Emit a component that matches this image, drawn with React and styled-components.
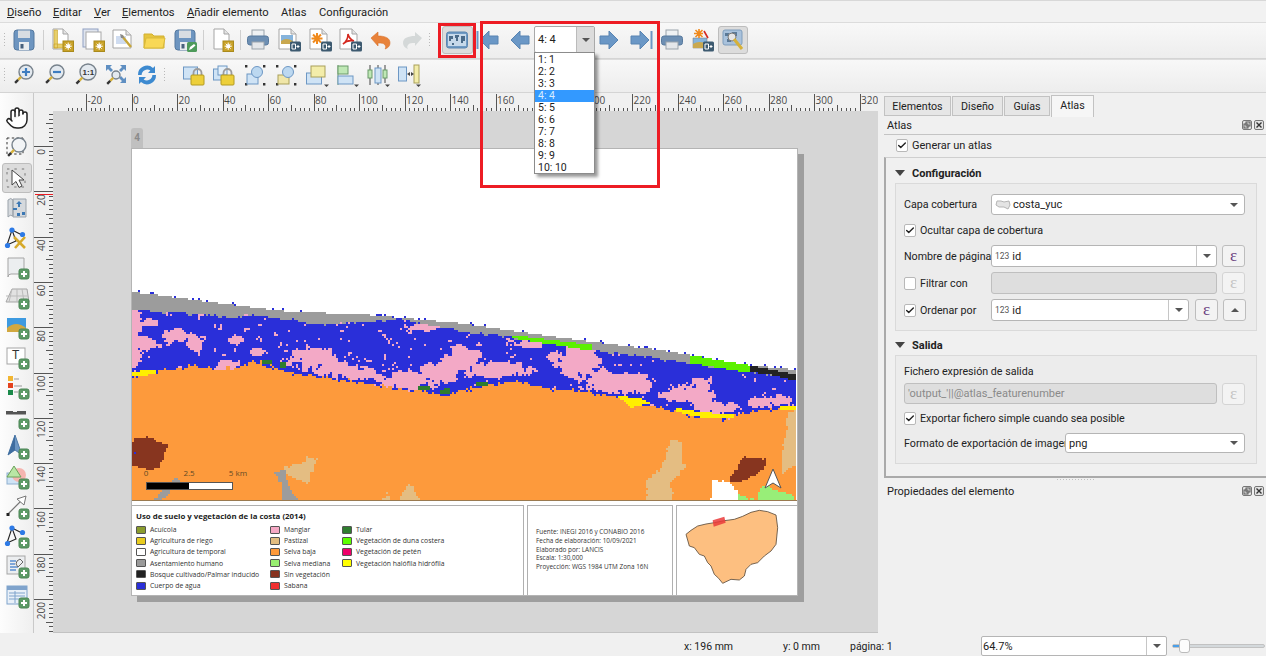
import React from "react";
import styled, { createGlobalStyle } from "styled-components";
import { Hand, Check } from "lucide-react";

const GlobalStyle = createGlobalStyle`
  html, body { margin: 0; padding: 0; overflow: hidden; }
  body { font-family: Roboto, "Noto Sans", sans-serif; font-size: 11px; color: #222; }
  * { box-sizing: border-box; }
`;

/* ---------- map raster, computed once from hand-measured outlines ---------- */

const line = (pts, x) => {
  if (x <= pts[0][0]) return pts[0][1];
  for (let i = 1; i < pts.length; i++) {
    if (x <= pts[i][0]) {
      const [a, b] = pts[i - 1];
      const [c, d] = pts[i];
      return b + ((d - b) * (x - a)) / (c - a);
    }
  }
  return pts[pts.length - 1][1];
};
const rnd = (x, y) => {
  const s = Math.sin(x * 127.1 + y * 311.7) * 43758.5453;
  return s - Math.floor(s);
};
const smooth = (x, y) => {
  const i = Math.floor(x), j = Math.floor(y);
  const u = x - i, v = y - j;
  const a = u * u * (3 - 2 * u), b = v * v * (3 - 2 * v);
  const top = rnd(i, j) * (1 - a) + rnd(i + 1, j) * a;
  const bot = rnd(i, j + 1) * (1 - a) + rnd(i + 1, j + 1) * a;
  return top * (1 - b) + bot * b;
};
const fbm = (x, y) => smooth(x, y) * 0.6 + smooth(x * 2.3, y * 2.3) * 0.4;
const inside = (pts, x, y) => {
  let hit = false;
  for (let i = 0, j = pts.length - 1; i < pts.length; j = i++) {
    const [a, b] = pts[i];
    const [c, d] = pts[j];
    if (b > y !== d > y && x < ((c - a) * (y - b)) / (d - b) + a) hit = !hit;
  }
  return hit;
};

const C = {
  gray: "#9c9c9c", blue: "#2a2fd9", pink: "#f3a9c6", orange: "#fd9a3c", tan: "#e4bd82",
  brown: "#87351f", lime: "#5cf000", black: "#232323", yellow: "#ffee00", forest: "#2f7d2f",
  light: "#98ee78", white: "#ffffff",
};

const coast = [[132,292],[158,295],[225,304],[292,312],[358,314],[458,323],[527,333],[593,342],[660,350],[690,355],[747,365],[797,370]];
const grayEnd = [[132,310],[182,313],[242,318],[248,314],[292,320],[325,325],[365,322],[398,319],[460,331],[510,337],[593,350],[690,363],[750,372],[797,377]];
const orangeTop = [[132,376],[158,371],[198,366],[215,369],[238,368],[252,361],[272,366],[292,374],[325,378],[372,384],[412,391],[445,395],[462,390],[510,382],[560,390],[593,393],[617,397],[660,408],[693,415],[727,418],[760,410],[797,408]];

const blobs = [
  [133,340,9,38],[145,344,12,10],[152,323,11,4],[175,336,13,8],[195,344,9,11],[235,340,9,6],[258,352,11,4],
  [225,365,13,6],[312,358,30,12],[338,370,32,8],[360,374,20,6],[408,381,36,10],[458,363,22,11],[442,373,24,13],
  [425,327,18,4],[458,350,10,6],[470,357,15,7],[493,370,40,8],[577,363,25,17],[580,352,18,8],[620,383,36,12],
  [603,377,15,10],[640,387,15,7],[677,395,18,8],[700,393,15,17],[713,407,20,7],[727,408,17,6],[760,403,13,6],
  [780,400,12,6],[557,357,10,6],[785,345,10,6],[530,345,14,4],
];

const bandOver = [
  [C.lime, [[512,335],[592,345],[592,351],[512,338]]],
  [C.lime, [[690,355],[750,365],[750,373],[690,363]]],
  [C.black, [[749,365],[797,375],[797,381],[773,375],[750,372]]],
  [C.yellow, [[617,396],[640,398],[650,403],[630,408],[625,402]]],
  [C.yellow, [[677,408],[700,412],[735,415],[733,419],[700,417],[677,412]]],
  [C.yellow, [[132,372],[156,369],[156,374],[132,377]]],
  [C.yellow, [[780,407],[797,407],[797,411],[780,410]]],
  [C.forest, [[262,360],[272,361],[272,365],[262,364]]],
  [C.forest, [[281,362],[287,362],[287,368],[281,368]]],
  [C.forest, [[419,385],[430,386],[430,391],[419,390]]],
  [C.forest, [[439,390],[450,388],[449,394],[440,394]]],
  [C.forest, [[477,381],[488,383],[488,386],[477,385]]],
];
const landOver = [
  [C.brown, [[130,441],[147,438],[167,444],[160,470],[130,467]]],
  [C.tan, [[285,467],[305,463],[307,458],[317,460],[308,483],[298,481],[285,472]]],
  [C.gray, [[273,472],[285,470],[287,478],[293,493],[300,501],[282,501],[283,487]]],
  [C.gray, [[153,501],[162,490],[178,478],[180,480],[160,501]]],
  [C.tan, [[382,501],[387,493],[390,501]]],
  [C.tan, [[398,501],[408,485],[413,487],[420,501]]],
  [C.tan, [[672,440],[683,441],[682,463],[687,465],[670,483],[673,501],[647,501],[647,483],[660,467]]],
  [C.brown, [[742,458],[767,458],[763,470],[747,480],[728,482],[737,467]]],
  [C.white, [[712,480],[730,482],[738,493],[738,501],[710,501]]],
  [C.light, [[762,483],[780,492],[793,495],[795,501],[758,501]]],
  [C.light, [[738,493],[753,501],[738,501]]],
  [C.tan, [[788,412],[798,410],[798,463],[783,473],[782,453],[785,433]]],
];

const classify = (x, y) => {
  const top = line(coast, x);
  if (y < top) return y > top - 2 && rnd(x, y) > 0.86 ? C.blue : null;
  for (const [col, pts] of bandOver) if (inside(pts, x, y)) return col;
  if (y < line(grayEnd, x) + (fbm(x / 5, 3) - 0.5) * 4) return C.gray;
  if (y < line(orangeTop, x) + (fbm(x / 3, y / 3) - 0.5) * 9) {
    let v = -0.3;
    for (const [cx, cy, rx, ry] of blobs) {
      const d = ((x - cx) / rx) ** 2 + ((y - cy) / ry) ** 2;
      v = Math.max(v, 1 - d);
    }
    return v + (fbm(x / 5, y / 5) - 0.5) * 1.7 + (rnd(x, y) - 0.5) * 0.35 > 0.2 ? C.pink : C.blue;
  }
  const dx = (fbm(x / 4, y / 4) - 0.5) * 5;
  const dy = (fbm(y / 4, x / 4) - 0.5) * 5;
  if (x < 142 && Math.abs(y - 453) < 2 && rnd(x, y) > 0.3) return C.blue;
  for (const [col, pts] of landOver) if (inside(pts, x + dx, y + dy)) return col;
  return C.orange;
};

const buildMap = () => {
  const paths = {};
  for (let y = 288; y < 500; y += 2) {
    let run = null, start = 132;
    for (let x = 132; x <= 796; x += 2) {
      const col = x < 796 ? classify(x + 1, y + 1) : "end";
      if (col !== run) {
        if (run) paths[run] = (paths[run] || "") + `M${start} ${y}h${x - start}v2h${start - x}z`;
        run = col;
        start = x;
      }
    }
  }
  return paths;
};
const mapPaths = buildMap();

/* ---------- icon bits ---------- */

const Ico = styled.svg`
  width: 26px;
  height: 26px;
  display: block;
`;
const I = ({ children }) => <Ico viewBox="0 0 26 26">{children}</Ico>;

const Doc = ({ x = 4, y = 2, w = 15, h = 20, s = "#a5a5a5" }) => (
  <g>
    <path d={`M${x} ${y}h${w - 5}l5 5v${h - 5}h-${w}z`} fill="#fff" stroke={s} />
    <path d={`M${x + w - 5} ${y}v5h5`} fill="#e4e4e4" stroke={s} />
  </g>
);
const Gear = () => (
  <g>
    <rect x="14" y="14" width="10.5" height="10.5" fill="#c9a227" stroke="#a98a1c" />
    <circle cx="19.2" cy="19.2" r="2" fill="#fff" />
    <path d="M19.2 15.6v7.2M15.6 19.2h7.2M16.7 16.7l5 5M21.7 16.7l-5 5" stroke="#fff" />
  </g>
);
const Plus = ({ x = 15, y = 15 }) => (
  <g>
    <rect x={x} y={y} width="10" height="10" rx="2" fill="#5c9a66" stroke="#4a8554" />
    <path d={`M${x + 5} ${y + 2}v6M${x + 2} ${y + 5}h6`} stroke="#fff" strokeWidth="2" />
  </g>
);
const Out = () => (
  <g>
    <rect x="14" y="14.5" width="11" height="10" rx="1.5" fill="#3d5a70" />
    <path d="M16 17h3.5v5H16zM20.5 19.5h3M22 18v3" fill="none" stroke="#fff" />
  </g>
);
const Lens = ({ cx = 15, cy = 10, r = 7, fill = "#e3e9ef" }) => (
  <g>
    <circle cx={cx} cy={cy} r={r} fill={fill} stroke="#77828c" strokeWidth="1.4" />
    <path d={`M${cx - r * 0.7} ${cy + r * 0.7}L${cx - r * 0.7 - 3} ${cy + r * 0.7 + 3}`} stroke="#d6b13a" strokeWidth="2.4" />
    <path d={`M${cx - r * 0.7 - 3} ${cy + r * 0.7 + 3}L${cx - r * 0.7 - 6} ${cy + r * 0.7 + 6}`} stroke="#333" strokeWidth="2.4" />
  </g>
);
const Floppy = () => (
  <g>
    <rect x="3" y="3" width="20" height="20" rx="3" fill="#6d95c0" stroke="#55799f" />
    <rect x="7" y="3.5" width="12" height="7.5" fill="#d8dde2" />
    <rect x="8" y="15" width="10" height="8" fill="#e9edf0" />
    <rect x="9.5" y="17" width="3" height="4.5" fill="#47617c" />
  </g>
);
const Printer = () => (
  <g>
    <rect x="7" y="3" width="12" height="8" fill="#eef1f3" stroke="#9aa3ab" />
    <rect x="2.5" y="9" width="21" height="9" rx="2.5" fill="#6d8fb3" stroke="#587a9e" />
    <rect x="7" y="15" width="12" height="7" fill="#e4e7ea" stroke="#9aa3ab" />
  </g>
);
const NavArrow = ({ dir, bar }) => (
  <g transform={dir < 0 ? "" : "translate(26 0) scale(-1 1)"}>
    <path d="M5 13l9-9v5h9v8h-9v5z" fill="#6a97c6" stroke="#5884b2" />
    {bar && <rect x="1.5" y="4" width="2" height="18" fill="#6a97c6" />}
  </g>
);
const MapBoard = () => (
  <g>
    <rect x="2.5" y="5" width="21" height="16" rx="2.5" fill="#6f9ac4" stroke="#5b86b0" />
    <rect x="4" y="7" width="18" height="12" fill="#c7d9ea" />
    <path d="M5 9h4v3H7v2H5zM11 8h4v2h-1v4h-2v-3h-1zM17 9h4v5h-2v2h-2zM8 16h2v2H8z" fill="#4a6a88" />
  </g>
);
const Lock = ({ x = 12, y = 12 }) => (
  <g>
    <path d={`M${x + 2.5} ${y + 1}v-3a4 4 0 0 1 8 0v3`} fill="none" stroke="#9b9b9b" strokeWidth="1.8" />
    <rect x={x} y={y} width="13" height="10" rx="1" fill="#edcf3a" stroke="#b39a20" />
  </g>
);
const Drop = () => <path d="M20 22.5h5l-2.5 2.5z" fill="#444" />;
const Handles = () => (
  <path d="M3 3h2.4v2.4H3zM21 3h2.4v2.4H21zM3 21h2.4v2.4H3zM21 21h2.4v2.4H21z" fill="#333" />
);
const Nodes = () => (
  <g>
    <path d="M8 5L3 20l9-4zM8 5l10 5" fill="none" stroke="#222" strokeWidth="1.1" />
    <circle cx="8" cy="5" r="2.6" fill="#2d7ae6" />
    <circle cx="18.5" cy="9.5" r="2.6" fill="#2d7ae6" />
    <circle cx="3.5" cy="20.5" r="2.6" fill="#2d7ae6" />
  </g>
);
const SvgLabel = styled.text`
  font-family: "Liberation Sans", sans-serif;
  font-size: ${(p) => p.$s || 9}px;
  font-weight: ${(p) => p.$b || 400};
`;

const icons = {
  save: <I><Floppy /></I>,
  layout: <I><Doc /><path d="M5 3h3.5v18H5zM5 17h13v4H5z" fill="#e7cf6a" stroke="#c9a227" strokeWidth=".6" /><Gear /></I>,
  dup: <I><rect x="3" y="2" width="15" height="18" fill="#dfe4ee" stroke="#8f9fc2" /><rect x="6" y="5" width="15" height="17" fill="#fff" stroke="#a8a8a8" /><Gear /></I>,
  manager: <I><Doc x={3} y={3} w={18} h={18} /><path d="M6 9h10v8H6z" fill="#cfdcf0" /><path d="M12 9l9 11" stroke="#c7a63a" strokeWidth="2.4" /><path d="M10 7l3 1 1 3-3 0z" fill="#8a8a8a" /></I>,
  open: <I><path d="M3 7h8l2 2h10v12H3z" fill="#e6c53e" stroke="#d2b030" /><path d="M5 11h19l-2 10H3z" fill="#f8d856" stroke="#d9b93a" /></I>,
  saveAs: <I><Floppy /><rect x="15" y="15" width="10" height="10" rx="1.5" fill="#4d9a5a" /><path d="M17 23l1-3 4-3 1.5 1.5-4 3.5z" fill="#fff" /></I>,
  page: <I><Doc x={5} /><Gear /></I>,
  print: <I><Printer /></I>,
  image: <I><Doc x={3} w={17} /><rect x="5" y="8" width="12" height="9" fill="#86b4dc" /><path d="M5 17v-3q5-4 12 0v3z" fill="#c9a84f" /><Out /></I>,
  svg: <I><Doc x={3} w={17} /><path d="M10 6v11M4.5 11.5h11M6 7.5l8 8M14 7.5l-8 8" stroke="#f08a1d" strokeWidth="2" /><Out /></I>,
  pdf: <I><Doc x={3} w={17} /><path d="M6 17c3-2 5-6 5-10 1 4 3 6 6 7-4-1-8 0-11 3z" fill="none" stroke="#d5281f" strokeWidth="1.6" /><Out /></I>,
  undo: <I><path d="M3 11l7-6v4c7 0 12 2 12 7 0 3-2 5-5 6 1-1 1-3 0-4-1-2-4-2-7-2v3z" fill="#e8823a" stroke="#d9702a" strokeWidth=".6" /></I>,
  redo: <I><path d="M23 11l-7-6v4C9 9 4 11 4 16c0 3 2 5 5 6-1-1-1-3 0-4 1-2 4-2 7-2v3z" fill="#d4d8d8" /></I>,
  atlas: <I><MapBoard /></I>,
  first: <I><NavArrow dir={-1} bar /></I>,
  prev: <I><NavArrow dir={-1} /></I>,
  next: <I><NavArrow dir={1} /></I>,
  last: <I><NavArrow dir={1} bar /></I>,
  printB: <I><Printer /></I>,
  exportB: <I><path d="M4 11h14v10H4z" fill="#86b4dc" stroke="#777" strokeWidth=".5" /><path d="M4 21v-4q6-4 14 0v4z" fill="#c9a84f" /><path d="M10 2v9M5 6.5h9M6.5 3l7 7M13.5 3l-7 7" stroke="#f08a1d" strokeWidth="1.6" /><path d="M15 4l4 7" stroke="#d5281f" strokeWidth="1.6" /><Out /></I>,
  atlasCfg: <I><rect x="3" y="3" width="19" height="15" rx="2" fill="#a9c2dc" stroke="#7e9dbc" /><path d="M5 6h4v3H5zM12 5h5v4h-5zM7 12h4v3H7z" fill="#5a7997" /><circle cx="12" cy="10" r="4" fill="#e6e6e6" stroke="#777" /><path d="M14 12l8 10" stroke="#d6b13a" strokeWidth="3" /></I>,

  zoomIn: <I><Lens /><path d="M15 6v8M11 10h8" stroke="#3d7cc0" strokeWidth="2.2" /></I>,
  zoomOut: <I><Lens /><path d="M11 10h8" stroke="#3d7cc0" strokeWidth="2.2" /></I>,
  zoomOne: <I><Lens r={8} cy={10} /><SvgLabel x="9.6" y="13" $s={8} $b={700} fill="#333">1:1</SvgLabel></I>,
  zoomFull: <I><path d="M3 3h6l-2 2 3 3-2 2-3-3-2 2zM23 3v6l-2-2-3 3-2-2 3-3-2-2zM23 21h-6l2-2-3-3 2-2 3 3 2-2z" fill="#5f8fc2" /><Lens cx={13} cy={13} r={4} /></I>,
  refresh: <I><path d="M4 13a9 9 0 0 1 15-7l2-2v7h-7l2.4-2.4A5.6 5.6 0 0 0 7.6 13z" fill="#3d8ad0" /><path d="M22 13a9 9 0 0 1-15 7l-2 2v-7h7l-2.4 2.4A5.6 5.6 0 0 0 18.4 13z" fill="#3d8ad0" /></I>,
  lock: <I><rect x="2.5" y="5" width="14" height="12" fill="#cfe3f5" stroke="#6d97c4" /><Lock x={10} y={13} /></I>,
  unlock: <I><rect x="2.5" y="7" width="11" height="11" fill="#cfe3f5" stroke="#6d97c4" /><rect x="7" y="4" width="9" height="9" fill="#e5f0fa" stroke="#6d97c4" /><Lock x={10} y={13} /></I>,
  group: <I><Handles /><rect x="5" y="12" width="11" height="10" fill="#cfe3f5" stroke="#6d97c4" /><circle cx="15" cy="10" r="5.5" fill="#bcd8f0" stroke="#6d97c4" /></I>,
  ungroup: <I><Handles /><rect x="5" y="13" width="11" height="9" fill="#f0e6a8" stroke="#a9a05a" /><circle cx="15" cy="10" r="5.5" fill="#bcd8f0" stroke="#6d97c4" /></I>,
  raise: <I><rect x="2.5" y="11" width="15" height="11" fill="#cfe3f5" stroke="#6d97c4" /><rect x="7" y="4" width="14" height="11" fill="#f3edaa" stroke="#a9a05a" /><Drop /></I>,
  align: <I><path d="M4 3v20" stroke="#6a9a6a" /><rect x="4" y="4" width="10" height="8" fill="#bfe8b5" stroke="#6a9a6a" /><rect x="4" y="14" width="15" height="8" fill="#cfe3f5" stroke="#6d97c4" /><Drop /></I>,
  distribute: <I><path d="M5 3v20M13 3v20M20 3v18" stroke="#444" /><rect x="3" y="8" width="4" height="8" fill="#bfe8b5" stroke="#6a9a6a" /><rect x="10" y="6" width="6" height="15" fill="#cfe3f5" stroke="#6d97c4" /><rect x="18" y="8" width="4" height="8" fill="#bfe8b5" stroke="#6a9a6a" /><Drop /></I>,
  resize: <I><rect x="2.5" y="5" width="8" height="14" fill="#cfe3f5" stroke="#6d97c4" /><rect x="18" y="3" width="5" height="18" fill="#f3edaa" stroke="#a9a05a" /><path d="M11 12l3-2v4zM18 12l-3-2v4z" fill="#444" /><Drop /></I>,

  marquee: <I><path d="M3 3h16v16H3z" fill="none" stroke="#333" strokeDasharray="2.4 2.4" /><Lens cx={15} cy={10} r={7} fill="#f2f4f6" /></I>,
  select: <I><path d="M3 4h18v18H3z" fill="none" stroke="#777" strokeDasharray="2.4 5" /><path d="M8 5v15l4-3.5 3 6 3-1.5-3-6h5z" fill="#fff" stroke="#444" /></I>,
  moveContent: <I><path d="M4 5q3-3 5 0v16q-3-2-5 1zM9 4h13v18H9z" fill="#d5d9dd" stroke="#9ba3ab" /><path d="M15 6l3 3h-2v3h-2V9h-2zM9 13h4v2H9zM18 17h3v3h-3zM13 18h3v3h-3z" fill="#3c78b4" /></I>,
  editNodes: <I><Nodes /><path d="M10 12l11 11M21 12L11 23" stroke="#d6a92a" strokeWidth="2.6" /></I>,
  addMap: <I><path d="M4 4h16v16H7q-3 0-3 3z" fill="#eceef0" stroke="#a5a5a5" /><Plus /></I>,
  add3d: <I><path d="M8 5h15l2 13H2z" fill="#e2e2e2" stroke="#a5a5a5" /><path d="M2 12h22M13 5v13M8 5l-3 13M18 5l2 13" stroke="#bbb" /><Plus /></I>,
  addPic: <I><rect x="3" y="4" width="19" height="14" fill="#3d9ae0" /><path d="M3 18v-4q9-8 19 0v4z" fill="#d1a83f" /><Plus /></I>,
  addLabel: <I><rect x="3" y="4" width="18" height="16" fill="#fff" stroke="#a5a5a5" /><SvgLabel x="8" y="15" $s={12} fill="#333">T</SvgLabel><Plus /></I>,
  addLegend: <I><rect x="4" y="2" width="5" height="5" fill="#f2b632" /><rect x="4" y="9" width="5" height="5" fill="#e4431f" /><rect x="4" y="16" width="5" height="5" fill="#1a8a4a" /><path d="M10 5h5M10 12h8M10 18h4" stroke="#999" /><Plus /></I>,
  addScale: <I><rect x="2" y="7" width="20" height="3.5" fill="#555" /><path d="M9 7.5h4" stroke="#eee" /><Plus /></I>,
  addNorth: <I><path d="M11 1l7 20-7-5-7 5z" fill="#6d97c4" stroke="#4f7aa8" /><path d="M11 1v15l-7 5z" fill="#3f6da0" /><Plus /></I>,
  addShape: <I><rect x="3" y="9" width="15" height="11" fill="#cfe3f5" stroke="#8fb0d0" /><circle cx="15" cy="11" r="7" fill="#f5b5b0" /><path d="M10 2l7 11H3z" fill="#b9e6a5" stroke="#6ba25a" /><Plus /></I>,
  addArrow: <I><path d="M4 20L18 6" stroke="#777" strokeWidth="1.2" /><rect x="2.5" y="19" width="3" height="3" fill="#222" /><path d="M22 2l-2 9-7-6z" fill="#fff" stroke="#777" /><Plus /></I>,
  addNode: <I><Nodes /><Plus /></I>,
  addHtml: <I><rect x="3" y="3" width="18" height="18" fill="#eceef0" stroke="#a5a5a5" /><path d="M6 8h6M6 11h5M6 14h8M6 17h6" stroke="#5b8fd0" strokeWidth="1.4" /><path d="M13 8l3-2 3 3-5 5-2-3z" fill="none" stroke="#666" /><Plus /></I>,
  addTable: <I><rect x="3" y="3" width="20" height="18" fill="#e9f0f8" stroke="#7fa3cc" /><rect x="3" y="3" width="20" height="4" fill="#7fa3cc" /><path d="M5 10h16M5 13h16M5 16h16M11 8v12" stroke="#7fa3cc" /><Plus /></I>,
};

/* ---------- layout ---------- */

const Screen = styled.div`
  position: relative;
  width: 1266px;
  height: 656px;
  display: flex;
  flex-direction: column;
  background: #f0f0f0;
  overflow: hidden;
`;

const MenuBar = styled.div`
  height: 22px;
  display: flex;
  align-items: center;
  padding: 1px 0 0 7px;
  background: #f2f2f2;
  border-top: 1px solid #d8d8d8;
`;
const MenuItem = styled.div`
  width: ${(p) => p.$w}px;
  font-size: 11.2px;
  white-space: nowrap;
`;

const ToolRow = styled.div`
  height: ${(p) => p.$h}px;
  display: flex;
  align-items: center;
  padding: 0 0 ${(p) => p.$low}px 2px;
  background: linear-gradient(#f8f8f8, #ededed);
  border-top: 1px solid #dcdcdc;
  border-bottom: 1px solid #d4d4d4;
`;
const Grip = styled.div`
  width: ${(p) => p.$w || 7}px;
  height: 16px;
  flex: none;
  background: radial-gradient(circle, #b9b9b9 0.7px, transparent 0.8px) left 1px top 0 / 3px 3px;
  background-repeat: repeat-y;
`;
const Sep = styled.div`
  width: ${(p) => p.$w || 7}px;
  height: 20px;
  flex: none;
  background: linear-gradient(#cfcfcf, #cfcfcf) center / 1px 100% no-repeat;
`;
const ToolButton = styled.div`
  width: 30.7px;
  height: 28px;
  flex: none;
  display: flex;
  align-items: center;
  justify-content: center;
  border-radius: 3px;
  border: 1px solid ${(p) => (p.$on ? "#bdbdbd" : "transparent")};
  background: ${(p) => (p.$on ? "#dcdcdc" : "transparent")};
`;

const PageCombo = styled.div`
  position: relative;
  width: 61px;
  height: 27px;
  flex: none;
  display: flex;
  background: #fff;
  border: 1px solid #a9a9a9;
  border-radius: 2px;
`;
const PageValue = styled.div`
  flex: 1;
  padding-left: 3px;
  line-height: 25px;
  font-size: 11px;
`;
const ArrowBox = styled.div`
  width: ${(p) => p.$w}px;
  flex: none;
  display: flex;
  align-items: center;
  justify-content: center;
  background: ${(p) => p.$bg || "transparent"};
  border-left: ${(p) => (p.$line ? "1px solid #bbb" : "none")};
`;
const Caret = styled.div`
  width: 0;
  height: 0;
  border-left: 4px solid transparent;
  border-right: 4px solid transparent;
  border-top: 4px solid ${(p) => p.$c || "#555"};
`;
const CaretUp = styled(Caret)`
  border-top: none;
  border-bottom: 4px solid #555;
`;
const PopupList = styled.div`
  position: absolute;
  z-index: 3;
  top: 25px;
  left: -1px;
  width: 61px;
  height: 122px;
  padding-top: 1px;
  background: #fff;
  border: 1px solid #8c8c8c;
  box-shadow: 3px 3px 3px rgba(0, 0, 0, 0.4);
`;
const PopupRow = styled.div`
  height: 12px;
  line-height: 12px;
  padding-left: 3px;
  font-size: 10.5px;
  white-space: pre;
  color: ${(p) => (p.$on ? "#d8ecff" : "#222")};
  background: ${(p) => (p.$on ? "#3399ff" : "transparent")};
`;

const Workspace = styled.div`
  height: 540px;
  display: flex;
`;
const SideBar = styled.div`
  width: 34px;
  flex: none;
  display: flex;
  flex-direction: column;
  align-items: center;
  padding-top: 10px;
  background: linear-gradient(90deg, #fdfdfd, #efefef);
  border-right: 1px solid #c9c9c9;
`;
const SideButton = styled(ToolButton)`
  width: 30px;
  height: 29.9px;
`;

const Designer = styled.div`
  width: 844px;
  flex: none;
  display: flex;
  flex-direction: column;
`;
const RulerArt = styled.svg`
  display: block;
  flex: none;
  background: #f0f0f0;
`;
const RulerText = styled.text`
  font-family: "Open Sans", sans-serif;
  font-size: 10px;
  fill: #4a4a4a;
`;
const DesignerBody = styled.div`
  flex: 1;
  display: flex;
  min-height: 0;
`;
const Canvas = styled.div`
  flex: 1;
  padding: 17px 0 0 78px;
  background: #d6d6d6;
  border-bottom: 1px solid #c2c2c2;
  overflow: hidden;
`;
const PageTab = styled.div`
  width: 12px;
  height: 20px;
  text-align: center;
  line-height: 20px;
  font-size: 10px;
  font-weight: 700;
  color: #8a8a8a;
  background: #c0c0c0;
  border-radius: 3px 3px 0 0;
`;
const Sheet = styled.div`
  width: 667px;
  height: 448px;
  display: flex;
  flex-direction: column;
  background: #fff;
  border: 1px solid #b4b4b4;
  box-shadow: 6px 6px 0 #9e9e9e;
`;
const MapFrame = styled.div`
  height: 352px;
  flex: none;
  border-bottom: 1px solid #9a7a50;
`;
const MapArt = styled.svg`
  display: block;
`;
const ScaleText = styled.text`
  font-family: "Open Sans", sans-serif;
  font-size: 8px;
  fill: #5f4a25;
`;
const PanelRow = styled.div`
  flex: 1;
  margin-top: 4px;
  display: flex;
  gap: 3px;
  font-family: "Open Sans", sans-serif;
`;
const Panel = styled.div`
  width: ${(p) => p.$w}px;
  flex: none;
  border: 1px solid #b0b0b0;
  border-width: ${(p) => p.$edge || "1px"};
  font-size: 6.85px;
  color: #333;
`;
const LegendPanel = styled(Panel)`
  padding: 5px 4px 0;
`;
const LegendTitle = styled.div`
  font-size: 7.85px;
  font-weight: 700;
  line-height: 10px;
  color: #222;
  margin-bottom: 3px;
`;
const LegendColumns = styled.div`
  display: grid;
  grid-template-columns: 134px 72px auto;
`;
const LegendRow = styled.div`
  height: 11.2px;
  display: flex;
  align-items: center;
  white-space: nowrap;
`;
const Swatch = styled.div`
  width: 10px;
  height: 8px;
  margin-right: 4px;
  flex: none;
  border: 1px solid #555;
  border-radius: 1px;
  background: ${(p) => p.$c};
`;
const InfoPanel = styled(Panel)`
  padding: 22px 0 0 8px;
  font-size: 6.4px;
  line-height: 8.75px;
`;
const LocatorArt = styled.svg`
  display: block;
`;

const Dock = styled.div`
  flex: 1;
  margin-left: 2px;
  padding: 1px 0 0 4px;
  display: flex;
  flex-direction: column;
`;
const Tabs = styled.div`
  height: 22px;
  flex: none;
  display: flex;
  align-items: flex-end;
`;
const Tab = styled.div`
  width: ${(p) => p.$w}px;
  height: ${(p) => (p.$on ? 22 : 20)}px;
  margin-right: ${(p) => (p.$on ? 0 : 1)}px;
  margin-bottom: ${(p) => (p.$on ? -1 : 0)}px;
  z-index: ${(p) => (p.$on ? 1 : 0)};
  text-align: center;
  line-height: ${(p) => (p.$on ? 20 : 19)}px;
  font-size: 10.7px;
  background: ${(p) => (p.$on ? "#f6f6f6" : "#e6e6e6")};
  border: 1px solid #c2c2c2;
  border-bottom: ${(p) => (p.$on ? "none" : "1px solid #c2c2c2")};
`;
const DockTitle = styled.div`
  height: ${(p) => p.$h}px;
  flex: none;
  display: flex;
  align-items: center;
  justify-content: space-between;
  padding: 0 3px;
  font-size: 11px;
`;
const DockControls = styled.div`
  display: flex;
  gap: 2px;
`;
const DockIcon = styled.svg`
  width: 10px;
  height: 10px;
  display: block;
`;
const Scroll = styled.div`
  height: 342px;
  flex: none;
  display: flex;
  flex-direction: column;
  border-top: 1px solid #c4c4c4;
`;
const AtlasToggle = styled.div`
  height: 22px;
  flex: none;
  display: flex;
  align-items: center;
  padding: 0 0 2px 12px;
`;
const OuterFrame = styled.div`
  flex: 1;
  padding: 0 10px 12px 9px;
  border-top: 1px solid #cfcfcf;
  border-left: 2px solid #aaa;
  border-bottom: 2px solid #aaa;
`;
const SectionHead = styled.div`
  height: ${(p) => p.$h}px;
  padding-top: ${(p) => p.$top}px;
  display: flex;
  align-items: center;
  font-size: 11px;
  font-weight: 700;
`;
const SectionCaret = styled.div`
  width: 0;
  height: 0;
  margin-right: 7px;
  border-left: 5px solid transparent;
  border-right: 5px solid transparent;
  border-top: 6px solid #444;
`;
const GroupBox = styled.div`
  display: flex;
  flex-direction: column;
  gap: ${(p) => p.$gap}px;
  padding: ${(p) => p.$pad};
  background: #ececec;
  border: 1px solid #dadada;
`;
const Row = styled.div`
  height: ${(p) => p.$h || 22}px;
  display: flex;
  align-items: center;
  white-space: nowrap;
  font-size: 10.7px;
`;
const Label = styled.div`
  width: ${(p) => p.$w}px;
  flex: none;
  font-size: 10.7px;
  white-space: nowrap;
`;
const BoxMark = styled.div`
  width: 12px;
  height: 13px;
  margin-right: 4px;
  flex: none;
  display: flex;
  align-items: center;
  justify-content: center;
  background: #fff;
  border: 1px solid #b8b8b8;
  border-radius: 2px;
`;
const Field = styled.div`
  width: ${(p) => p.$w}px;
  height: ${(p) => p.$h || 22}px;
  flex: none;
  display: flex;
  align-items: center;
  padding-left: 3px;
  font-size: 11px;
  color: ${(p) => (p.$dim ? "#8a8a8a" : "#222")};
  background: ${(p) => (p.$off ? "#dedede" : "#fff")};
  border: 1px solid ${(p) => (p.$off ? "#bfbfbf" : "#b5b5b5")};
  border-radius: 3px;
`;
const FieldText = styled.div`
  flex: 1;
`;
const Tiny = styled.span`
  font-size: 8.5px;
  color: #555;
  margin-right: 3px;
  vertical-align: 1px;
`;
const FieldEnd = styled.div`
  width: 20px;
  height: 100%;
  flex: none;
  display: flex;
  align-items: center;
  justify-content: center;
  border-left: ${(p) => (p.$line ? "1px solid #c6c6c6" : "none")};
`;
const SquareButton = styled.div`
  width: 23px;
  height: 22px;
  margin-left: ${(p) => p.$m || 5}px;
  flex: none;
  display: flex;
  align-items: center;
  justify-content: center;
  font-family: "Liberation Serif", serif;
  font-size: 17px;
  color: ${(p) => (p.$off ? "#c4c4c4" : "#6b3f80")};
  background: #f3f3f3;
  border: 1px solid ${(p) => (p.$off ? "#d4d4d4" : "#bdbdbd")};
  border-radius: 3px;
`;
const LayerMark = styled.svg`
  width: 16px;
  height: 12px;
  margin-right: 2px;
  flex: none;
`;
const Splitter = styled.div`
  height: 6px;
  flex: none;
  background: radial-gradient(circle, #c0c0c0 0.7px, transparent 0.8px) center / 3px 3px repeat-x;
  background-size: 3px 3px;
  margin: 0 172px 0 172px;
`;

const StatusBar = styled.div`
  flex: 1;
  display: flex;
  align-items: center;
  padding: 3px 0 0 684px;
  font-size: 10.5px;
`;
const StatusItem = styled.div`
  width: ${(p) => p.$w}px;
  flex: none;
`;
const ZoomCombo = styled.div`
  width: 186px;
  height: 20px;
  flex: none;
  display: flex;
  align-items: center;
  padding-left: 1px;
  font-size: 11px;
  background: #fff;
  border: 1px solid #b5b5b5;
  border-radius: 2px;
`;
const Slider = styled.div`
  position: relative;
  width: 93px;
  height: 4px;
  margin-left: 5px;
  flex: none;
  background: #d4d9dc;
  border: 1px solid #c2c2c2;
  border-radius: 2px;
`;
const SliderFill = styled.div`
  width: 8px;
  height: 100%;
  background: #4a9fe8;
`;
const SliderKnob = styled.div`
  position: absolute;
  left: 6px;
  top: -6px;
  width: 11px;
  height: 14px;
  background: #fdfdfd;
  border: 1px solid #bbb;
  border-radius: 3px;
`;
const Callout = styled.div`
  position: absolute;
  z-index: 4;
  left: ${(p) => p.$x}px;
  top: ${(p) => p.$y}px;
  width: ${(p) => p.$w}px;
  height: ${(p) => p.$h}px;
  border: 3px solid #ed1c24;
  pointer-events: none;
`;

/* ---------- pieces ---------- */

const menus = [
  ["D", "iseño", 46], ["E", "ditar", 41], ["V", "er", 28], ["E", "lementos", 65],
  ["A", "ñadir elemento", 94], ["", "Atlas", 38], ["", "Configuración", 80],
];
const topLeft = ["save", "|", "layout", "dup", "manager", "open", "saveAs", "|", "page", "/", "print", "image", "svg", "pdf", "undo", "redo"];
const topRight = ["next", "last", "printB", "exportB"];
const second = ["zoomIn", "zoomOut", "zoomOne", "zoomFull", "refresh", "~", "lock", "unlock", "group", "ungroup", "raise", "align", "distribute", "resize"];
const side = ["hand", "marquee", "select", "moveContent", "editNodes", "addMap", "add3d", "addPic", "addLabel", "addLegend", "addScale", "addNorth", "addShape", "addArrow", "addNode", "addHtml", "addTable"];
const pagesList = ["1: 1", "2: 2", "3: 3", "4: 4", "5: 5", "6: 6", "7: 7", "8: 8", "9: 9", "10: 10"];

const legend = [
  [["Acuícola", "#8a9c2e"], ["Agricultura de riego", "#e8cc1f"], ["Agricultura de temporal", "#ffffff"], ["Asentamiento humano", "#9a9a9a"], ["Bosque cultivado/Palmar inducido", "#222222"], ["Cuerpo de agua", "#2a2fd8"]],
  [["Manglar", "#f5a8c4"], ["Pastizal", "#e3bd80"], ["Selva baja", "#ff9a3a"], ["Selva mediana", "#98ee70"], ["Sin vegetación", "#87321f"], ["Sabana", "#f03030"]],
  [["Tular", "#2f7d2f"], ["Vegetación de duna costera", "#5cff00"], ["Vegetación de petén", "#f0006a"], ["Vegetación halófila hidrófila", "#ffff00"]],
];
const infoLines = [
  "Fuente: INEGI 2016 y CONABIO 2016",
  "Fecha de elaboración: 10/09/2021",
  "Elaborado por: LANCIS",
  "Escala: 1:30,000",
  "Proyección: WGS 1984 UTM Zona 16N",
];

const Tools = ({ list }) =>
  list.map((name, i) => {
    if (name === "|") return <Sep key={i} />;
    if (name === "/") return <Sep key={i} $w={5} />;
    if (name === "~") return <Grip key={i} $w={16} />;
    return <ToolButton key={i}>{icons[name]}</ToolButton>;
  });

const range = (from, to, step) => {
  const out = [];
  for (let v = from; v <= to; v += step) out.push(v);
  return out;
};

const TopRuler = () => {
  const px = (mm) => 97.5 + mm * 2.275;
  return (
    <RulerArt width="844" height="18">
      {range(-28, 320, 2).map((mm) => {
        const major = mm % 20 === 0;
        const len = major ? 17 : mm % 10 === 0 ? 6 : 3;
        const x = Math.round(px(mm)) + 0.5;
        return px(mm) > 20 && <line key={mm} x1={x} x2={x} y1={18} y2={18 - len} stroke="#555" />;
      })}
      {range(-20, 320, 20).map((mm) => (
        <RulerText key={mm} x={px(mm) + 1.5} y="11">{mm}</RulerText>
      ))}
    </RulerArt>
  );
};

const LeftRuler = () => {
  const py = (mm) => 35 + mm * 2.265;
  return (
    <RulerArt width="19" height="521">
      {range(-14, 216, 2).map((mm) => {
        const major = mm % 20 === 0;
        const len = major ? 19 : mm % 10 === 0 ? 7 : 4;
        const y = Math.round(py(mm)) + 0.5;
        return <line key={mm} x1={19} x2={19 - len} y1={y} y2={y} stroke="#555" />;
      })}
      {range(0, 200, 20).map((mm) => (
        <RulerText key={mm} transform={`translate(11 ${py(mm) + 3}) rotate(-90)`} textAnchor="end">{mm}</RulerText>
      ))}
      <line x1="1" x2="19" y1="83.5" y2="83.5" stroke="#ed1c24" />
    </RulerArt>
  );
};

const MapView = () => (
  <MapArt width="665" height="351" viewBox="132 149 665 351" shapeRendering="crispEdges">
    {Object.entries(mapPaths).map(([col, d]) => <path key={col} d={d} fill={col} />)}
    <rect x="146" y="482" width="43" height="7" fill="#000" />
    <rect x="189" y="482" width="43" height="7" fill="#fff" />
    <rect x="146" y="482" width="86" height="7" fill="none" stroke="#555" />
    <ScaleText x="146" y="476" textAnchor="middle">0</ScaleText>
    <ScaleText x="189" y="476" textAnchor="middle">2.5</ScaleText>
    <ScaleText x="238" y="476" textAnchor="middle">5 km</ScaleText>
    <path d="M773 469l8 19-8-5-8 5z" fill="#fff" stroke="#555" shapeRendering="auto" />
  </MapArt>
);

const Locator = () => (
  <LocatorArt width="120" height="88" viewBox="468 15 360 264">
    <path
      d="M495 100l15-12 20-13 25-6 25-4 30-6 30-4 25-9 25-12 25-6 25 4 25 10 5 38-5 50-15 20-20 15-20 20-20 5-15 15-5 20-15 12-25-2-25 12-12-15-13-12-10-25-10-10-10-20-15-5-15-20-15-5z"
      fill="#fdbf80"
      stroke="#5a4a3a"
      strokeWidth="2.5"
    />
    <path d="M575 58l35-11 4 18-36 12z" fill="#ea3a3a" fillOpacity=".85" />
  </LocatorArt>
);

const Tick = ({ on = true }) => (
  <BoxMark>{on && <Check size={11} strokeWidth={3.4} color="#222" />}</BoxMark>
);
const DockButtons = () => (
  <DockControls>
    <DockIcon viewBox="0 0 10 10">
      <rect x=".5" y=".5" width="9" height="9" rx="1.5" fill="#e4e4e4" stroke="#777" />
      <rect x="4" y="2" width="4" height="4" fill="none" stroke="#555" />
      <rect x="2" y="4" width="4" height="4" fill="none" stroke="#555" />
    </DockIcon>
    <DockIcon viewBox="0 0 10 10">
      <rect x=".5" y=".5" width="9" height="9" rx="1.5" fill="#e4e4e4" stroke="#777" />
      <path d="M2.5 2.5l5 5M7.5 2.5l-5 5" stroke="#333" strokeWidth="1.4" />
    </DockIcon>
  </DockControls>
);
const IdField = ({ w }) => (
  <Field $w={w}>
    <FieldText><Tiny>123</Tiny>id</FieldText>
    <FieldEnd $line><Caret /></FieldEnd>
  </Field>
);

const AtlasDock = () => (
  <Dock>
    <Tabs>
      <Tab $w={67}>Elementos</Tab>
      <Tab $w={51}>Diseño</Tab>
      <Tab $w={46}>Guías</Tab>
      <Tab $w={43} $on>Atlas</Tab>
    </Tabs>
    <DockTitle $h={18}>Atlas<DockButtons /></DockTitle>
    <Scroll>
      <AtlasToggle><Tick />Generar un atlas</AtlasToggle>
      <OuterFrame>
        <SectionHead $h={25} $top={5}><SectionCaret />Configuración</SectionHead>
        <GroupBox $gap={5} $pad="10px 10px 9px 8px">
          <Row $h={21}>
            <Label $w={87}>Capa cobertura</Label>
            <Field $w={254} $h={21}>
              <LayerMark viewBox="0 0 16 12"><path d="M2 2h4l3 1 5-1 1 4-2 4-4-2H4L1 6z" fill="#e4e4e4" stroke="#b5b5b5" /></LayerMark>
              <FieldText>costa_yuc</FieldText>
              <FieldEnd><Caret /></FieldEnd>
            </Field>
          </Row>
          <Row $h={20}><Tick />Ocultar capa de cobertura</Row>
          <Row>
            <Label $w={87}>Nombre de página</Label>
            <IdField w={226} />
            <SquareButton>&#949;</SquareButton>
          </Row>
          <Row>
            <Tick on={false} />
            <Label $w={71}>Filtrar con</Label>
            <Field $w={226} $off />
            <SquareButton $off>&#949;</SquareButton>
          </Row>
          <Row>
            <Tick />
            <Label $w={71}>Ordenar por</Label>
            <IdField w={198} />
            <SquareButton $m={6}>&#949;</SquareButton>
            <SquareButton $m={5}><CaretUp /></SquareButton>
          </Row>
        </GroupBox>
        <SectionHead $h={24} $top={4}><SectionCaret />Salida</SectionHead>
        <GroupBox $gap={4} $pad="8px 10px 10px 8px">
          <Row $h={15}>Fichero expresión de salida</Row>
          <Row $h={21}>
            <Field $w={313} $h={21} $off $dim>'output_'||@atlas_featurenumber</Field>
            <SquareButton $off>&#949;</SquareButton>
          </Row>
          <Row $h={21}><Tick />Exportar fichero simple cuando sea posible</Row>
          <Row $h={20}>
            <Label $w={161}>Formato de exportación de imagen</Label>
            <Field $w={180} $h={20}>
              <FieldText>png</FieldText>
              <FieldEnd><Caret /></FieldEnd>
            </Field>
          </Row>
        </GroupBox>
      </OuterFrame>
    </Scroll>
    <Splitter />
    <DockTitle $h={18}>Propiedades del elemento<DockButtons /></DockTitle>
  </Dock>
);

export default function App() {
  return (
    <Screen>
      <GlobalStyle />
      <MenuBar>
        {menus.map(([key, rest, w]) => (
          <MenuItem key={rest} $w={w}><u>{key}</u>{rest}</MenuItem>
        ))}
      </MenuBar>

      <ToolRow $h={37} $low={2}>
        <Grip />
        <Tools list={topLeft} />
        <Grip $w={15} />
        <ToolButton $on>{icons.atlas}</ToolButton>
        <ToolButton>{icons.first}</ToolButton>
        <ToolButton>{icons.prev}</ToolButton>
        <PageCombo>
          <PageValue>4: 4</PageValue>
          <ArrowBox $w={18} $bg="#dcdcdc" $line><Caret /></ArrowBox>
          <PopupList>
            {pagesList.map((p) => <PopupRow key={p} $on={p === "4: 4"}>{p}</PopupRow>)}
          </PopupList>
        </PageCombo>
        <Tools list={topRight} />
        <ToolButton $on>{icons.atlasCfg}</ToolButton>
      </ToolRow>

      <ToolRow $h={34} $low={3}>
        <Grip />
        <Tools list={second} />
      </ToolRow>

      <Workspace>
        <SideBar>
          {side.map((name) => (
            <SideButton key={name} $on={name === "select"}>
              {name === "hand" ? <Hand size={24} color="#222" fill="#fff" strokeWidth={1.5} /> : icons[name]}
            </SideButton>
          ))}
        </SideBar>
        <Designer>
          <TopRuler />
          <DesignerBody>
            <LeftRuler />
            <Canvas>
              <PageTab>4</PageTab>
              <Sheet>
                <MapFrame><MapView /></MapFrame>
                <PanelRow>
                  <LegendPanel $w={392} $edge="1px 1px 0 0">
                    <LegendTitle>Uso de suelo y vegetación de la costa (2014)</LegendTitle>
                    <LegendColumns>
                      {legend.map((col, i) => (
                        <div key={i}>
                          {col.map(([name, c]) => (
                            <LegendRow key={name}><Swatch $c={c} />{name}</LegendRow>
                          ))}
                        </div>
                      ))}
                    </LegendColumns>
                  </LegendPanel>
                  <InfoPanel $w={146} $edge="1px 1px 0 1px">
                    {infoLines.map((t) => <div key={t}>{t}</div>)}
                  </InfoPanel>
                  <Panel $w={122} $edge="1px 0 0 1px"><Locator /></Panel>
                </PanelRow>
              </Sheet>
            </Canvas>
          </DesignerBody>
        </Designer>
        <AtlasDock />
      </Workspace>

      <StatusBar>
        <StatusItem $w={99}>x: 196 mm</StatusItem>
        <StatusItem $w={67}>y: 0 mm</StatusItem>
        <StatusItem $w={131}>página: 1</StatusItem>
        <ZoomCombo>
          <FieldText>64.7%</FieldText>
          <FieldEnd $line><Caret /></FieldEnd>
        </ZoomCombo>
        <Slider><SliderFill /><SliderKnob /></Slider>
      </StatusBar>

      <Callout $x={438} $y={23} $w={38} $h={35} />
      <Callout $x={480} $y={21} $w={180} $h={167} />
    </Screen>
  );
}
